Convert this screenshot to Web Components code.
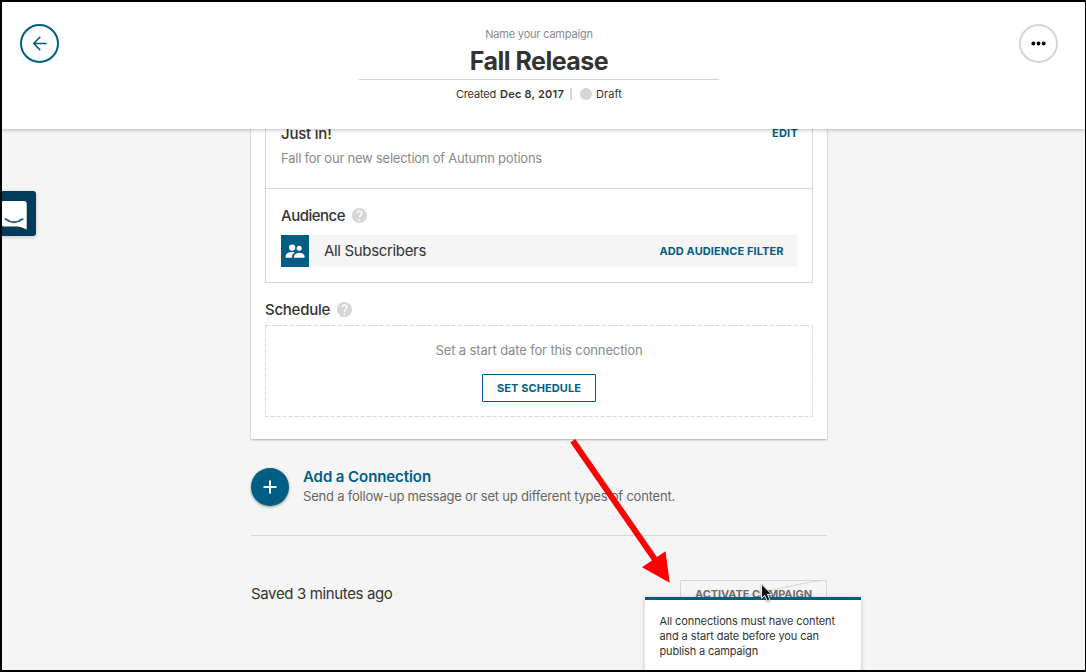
<!DOCTYPE html>
<html lang="en"><head><meta charset="utf-8"><title>Fall Release</title>
<style>
html,body{margin:0;padding:0}
body{width:1086px;height:672px;overflow:hidden;font-family:Inter,"Open Sans",sans-serif;color:#333}
</style></head><body>
<campaign-page></campaign-page>
<script>
function define(name, html, ready){
  customElements.define(name, class extends HTMLElement{
    connectedCallback(){
      if(this.shadowRoot) return;
      const t=document.createElement('template'); t.innerHTML=html;
      this.attachShadow({mode:'open'}).append(t.content.cloneNode(true));
      if(ready) ready.call(this);
    }
  });
}
/* One line of text, tracked so that it spans the width in "w" */
define('fit-text','<style>:host{display:inline-block;white-space:nowrap}</style><slot></slot>',function(){
  const w=parseFloat(this.getAttribute('w')), n=this.getBoundingClientRect().width;
  if(w&&n) this.style.letterSpacing=((w-n)/this.textContent.length).toFixed(4)+'px';
});
define('help-icon',`<style>:host{display:block;width:15px;height:15px;margin-top:-1px}svg{display:block}</style>
<svg width="15" height="15" viewBox="2 2 20 20"><path fill="#d6d6d6" d="M12 2C6.480 2 2 6.480 2 12s4.480 10 10 10 10-4.480 10-10S17.520 2 12 2zm1 17h-2v-2h2v2zm2.070-7.750l-.9.920C13.450 12.900 13 13.500 13 15h-2v-.5c0-1.100.45-2.100 1.170-2.830l1.240-1.260c.370-.360.590-.860.590-1.410 0-1.100-.9-2-2-2s-2 .9-2 2H8c0-2.210 1.790-4 4-4s4 1.790 4 4c0 .880-.360 1.680-.930 2.250z"/></svg>`);
define('section-title',`<style>:host{display:flex;align-items:center;gap:7px;height:20px;line-height:20px;font-size:15px;font-weight:500}</style><slot></slot><help-icon></help-icon>`);
define('page-header',`<style>
:host{display:flex;position:relative;z-index:2;height:127px;background:#fff;box-shadow:0 1px 4px rgba(0,0,0,.26);justify-content:space-between;box-sizing:border-box;padding:22px 27px 0 18px}
.round{width:39px;height:39px;flex:none}svg{display:block}
.mid{width:360px;display:flex;flex-direction:column;align-items:center}
.label{font-size:11px;line-height:16px;margin-top:2px;color:#8a8a8a}
h1{margin:5px 0 0;font-size:25px;line-height:28px;font-weight:700;height:32px}
.meta{border-top:1px solid #d6d6d6;width:100%;display:flex;justify-content:center;align-items:center;font-size:11px;line-height:14px;padding-top:7px;box-sizing:border-box}
b{font-weight:600}.sep{width:2px;height:12px;background:#d6d6d6;margin:0 8px 0 6px}.dot{width:12px;height:12.500px;border-radius:50%;background:#d6d6d6;margin-right:4px}
</style>
<div class="round"><svg width="39" height="39" fill="none" stroke="#005e85"><circle cx="19.500" cy="19.500" r="18.500" stroke-width="2"/><path stroke-width="1.500" d="M26.700 19.500H13.500M20.300 12.900l-6.600 6.600 6.600 6.600"/></svg></div>
<div class="mid"><div class="label"><fit-text w="107.500">Name your campaign</fit-text></div>
<h1><fit-text w="138.500">Fall Release</fit-text></h1>
<div class="meta"><fit-text w="40">Created</fit-text><b style="margin-left:4px"><fit-text w="64">Dec 8, 2017</fit-text></b><i class="sep"></i><i class="dot"></i><fit-text w="26">Draft</fit-text></div></div>
<div class="round"><svg width="39" height="39"><circle cx="19.500" cy="19.500" r="18.500" stroke-width="2" fill="none" stroke="#d6d6d6"/><circle cx="14.300" cy="19.500" r="1.900"/><circle cx="19.500" cy="19.500" r="1.900"/><circle cx="24.700" cy="19.500" r="1.900"/></svg></div>`);
define('connection-card',`<style>
:host{display:block;width:576px;height:325px;margin-top:-15px;box-sizing:border-box;padding:0 14px;background:#fff;box-shadow:0 1px 2px rgba(0,0,0,.3)}
.box{border:1px solid #d6d6d6;border-top:0}
.message{height:75px;box-sizing:border-box;border-bottom:1px solid #d6d6d6;padding:10px 15px 0;display:flex;justify-content:space-between}
.title{font-size:15px;font-weight:500;line-height:20px}
.desc{font-size:13px;line-height:20px;margin-top:4px;color:#8a8a8a}
.link{font-size:11px;font-weight:700;color:#005e85;line-height:18px}
.message .link{margin-right:-1px}
.audience{padding:17px 15px 15px}
.bar{margin-top:9px;height:32px;background:#f5f5f5;display:flex;align-items:center}
.tile{width:28px;height:32px;background:#005e85;display:flex;align-items:center;justify-content:center;margin-right:15px}
.name{font-size:15px;line-height:20px;flex:1}.bar .link{margin-right:13.500px}
section-title.s{margin:17px 0 5px}
.dash{height:92px;box-sizing:border-box;position:relative;display:flex;flex-direction:column;align-items:center;padding-top:15px}
.dash .outline{position:absolute;inset:0;width:100%;height:100%}
.dash .desc{margin:0}
button{position:relative;margin:14px 0 0;width:114px;height:28px;border:1px solid #005e85;border-radius:1px;background:#fff;color:#005e85;font:700 11px/26px Inter,sans-serif;padding:0}
</style>
<div class="box"><div class="message"><div><div class="title"><fit-text w="50.500">Just in!</fit-text></div><div class="desc"><fit-text w="261">Fall for our new selection of Autumn potions</fit-text></div></div><div class="link"><fit-text w="26">EDIT</fit-text></div></div>
<div class="audience"><section-title><fit-text w="64">Audience</fit-text></section-title>
<div class="bar"><div class="tile"><svg width="20" height="16" viewBox="0 0 20 16" fill="#fff"><circle cx="7.200" cy="4.600" r="3.100"/><circle cx="14.200" cy="5.200" r="2.500"/><path d="M.7 14.700v-1.700c0-2.600 3.400-4 6.500-4 1 0 1.800.1 2.600.4-1.600.9-2.700 2.200-2.700 4v1.300z"/><path d="M9 14.700v-1.300c0-2.300 2.700-3.700 5.300-3.700s5.200 1.400 5.200 3.400v1.600z"/></svg></div><span class="name"><fit-text w="102">All Subscribers</fit-text></span><span class="link"><fit-text w="124">ADD AUDIENCE FILTER</fit-text></span></div></div></div>
<section-title class="s"><fit-text w="65">Schedule</fit-text></section-title>
<div class="dash"><svg class="outline"><rect x=".5" y=".5" width="547" height="91" fill="none" stroke="#d6d6d6" stroke-dasharray="4 2"/></svg><div class="desc"><fit-text w="207">Set a start date for this connection</fit-text></div><button><fit-text w="84">SET SCHEDULE</fit-text></button></div>`);
define('add-connection',`<style>:host{display:flex;margin-top:29px;height:67px;border-bottom:1px solid #d6d6d6}
.plus{width:38px;height:38px;border-radius:50%;background:#005e85;box-shadow:0 1px 3px rgba(0,0,0,.4);margin-right:14px}svg{display:block}
.t{font-size:15px;line-height:20px;font-weight:600;color:#005e85;margin-top:-1px}.d{font-size:13px;line-height:20px;color:#666;margin-top:-1px}</style>
<div class="plus"><svg width="38" height="38"><path d="M19 12.500v13M12.500 19h13" stroke="#fff" stroke-width="2"/></svg></div>
<div><div class="t"><fit-text w="128">Add a Connection</fit-text></div><div class="d"><fit-text w="372">Send a follow-up message or set up different types of content.</fit-text></div></div>`);
define('tool-tip',`<style>:host{display:block;position:absolute;left:643px;top:595px;width:216px;height:90px;box-sizing:border-box;border-top:3px solid #005e85;background:#fff;padding:14px 14px;font-size:11px;line-height:15px;box-shadow:0 1px 5px rgba(0,0,0,.2)}fit-text{display:table;margin-left:.5px}</style>
<fit-text w="175.500">All connections must have content</fit-text><fit-text w="159.500">and a start date before you can</fit-text><fit-text w="98.500">publish a campaign</fit-text>`);
define('page-footer',`<style>:host{display:flex;justify-content:space-between;margin-top:44px}
.saved{font-size:15px;line-height:20px;margin-top:4px}
.btn{position:relative;width:147px;height:30px;box-sizing:border-box;border:1px solid #d6d6d6;border-radius:1px;font-size:11px;font-weight:700;line-height:27px;color:#6f6f6f;text-align:center}
svg{position:absolute;left:0;top:0}.btn fit-text{position:relative}</style>
<div class="saved"><fit-text w="141.500">Saved 3 minutes ago</fit-text></div><div class="btn"><svg width="145" height="28"><path d="M138 0Q125 1 65 15" fill="none" stroke="#d6d6d6"/></svg><fit-text w="117">ACTIVATE CAMPAIGN</fit-text></div>`);
define('chat-tab',`<style>:host{display:block;position:absolute;left:0;top:189px;width:34px;height:45px;background:#003c59;border-radius:0 3px 3px 0;box-shadow:0 1px 4px rgba(0,0,0,.2)}svg{display:block}</style>
<svg width="34" height="45"><path fill="#fff" d="M0 10.500Q1 10 2 10H22Q24.700 10 24.700 12.700V38.500Q20 36 16 35.500H2Q0 35.500 0 34z"/><path d="M3.500 28Q12 34.500 20.500 28" fill="none" stroke="#2c5b75" stroke-width="1.800" stroke-linecap="round"/></svg>`);
define('pointer-marks',`<style>:host{display:block;position:absolute;inset:0;z-index:5}svg{display:block}</style>
<svg width="1083" height="668" viewBox="2 2 1083 668"><path d="M572.800 440.800L656 561" stroke="#f00" stroke-width="6"/><path fill="#f00" d="M669.700 582.700L642 567.300 665.500 551.300z"/>
<path style="filter:drop-shadow(0 1px 1px rgba(0,0,0,.4))" d="M761.500 584V598.300L764.700 595.300 767.200 600.900 769.900 599.700 767.500 594.400H771.700z" fill="#111" stroke="#fff" stroke-width=".9"/></svg>`);
define('campaign-page',`<style>
:host{display:block;position:relative;box-sizing:border-box;width:1086px;height:672px;border:solid #000;border-width:2px 1px 2px 2px;background:#f5f5f5;overflow:hidden}
main{width:576px;margin-left:249px}
</style><page-header></page-header><main><connection-card></connection-card><add-connection></add-connection><page-footer></page-footer></main><chat-tab></chat-tab><tool-tip></tool-tip><pointer-marks></pointer-marks>`);
</script></body></html>
